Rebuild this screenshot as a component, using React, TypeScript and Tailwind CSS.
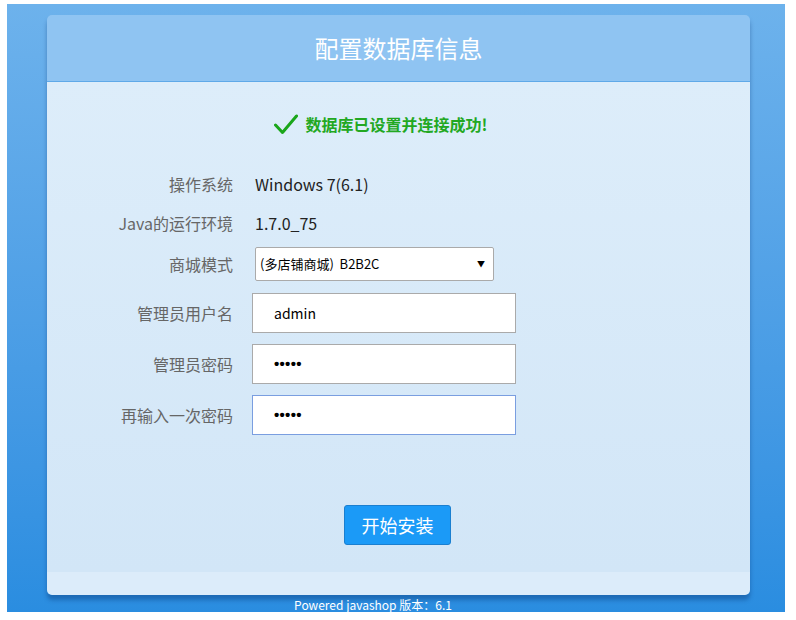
import { type FC } from 'react';

const font = "font-['Microsoft_YaHei','Noto_Sans_CJK_SC',sans-serif]";

const Row: FC<{ label: string; className?: string; children: React.ReactNode }> = ({ label, className, children }) => (
  <div className={`flex items-center ${className ?? ''}`}>
    <div className="w-[186px] shrink-0 text-right text-[16px] text-[#666]">{label}</div>
    <div className="flex-1">{children}</div>
  </div>
);

const Dots = () => (
  <span className="font-['Liberation_Sans',Arial,sans-serif] text-[15px] font-bold tracking-[0.3px]">•••••</span>
);

export default function App() {
  return (
    <div className={`min-h-[620px] bg-white pl-[7px] pt-[4px] ${font}`}>
      <div className="relative h-[608px] w-[778px] overflow-hidden bg-gradient-to-b from-[#6db2ec] to-[#2a8de0]">
        <div className="ml-[40px] mr-[35px] mt-[11px] flex h-[580px] flex-col overflow-hidden rounded-[5px] shadow-[0_5px_4px_rgba(0,40,100,0.35)]">
          <div className="flex h-[67px] shrink-0 items-center justify-center border-b border-[#5fa9e8] bg-[#8fc4f2] text-[24px] text-white">
            配置数据库信息
          </div>

          <div className="flex flex-1 flex-col bg-gradient-to-b from-[#ddedfa] to-[#d2e6f7]">
            <div className="mt-[30px] flex h-[24px] items-center justify-center gap-[8px] pr-[36px]">
              <svg width="24" height="21" viewBox="0 0 24 21" fill="none">
                <path d="M1.5 11 L8.5 18.5 L22.5 2" stroke="#1aa61a" strokeWidth="3" strokeLinecap="round" strokeLinejoin="round" />
              </svg>
              <span className="text-[16px] font-bold text-[#22a822]">数据库已设置并连接成功!</span>
            </div>

            <Row label="操作系统" className="mt-[33px] h-[30px]">
              <span className="pl-[22px] text-[16px] text-[#222]">Windows 7(6.1)</span>
            </Row>
            <Row label="Java的运行环境" className="mt-[9px] h-[30px]">
              <span className="pl-[22px] text-[16px] text-[#222]">1.7.0_75</span>
            </Row>
            <Row label="商城模式" className="mt-[9px] h-[34px]">
              <div className="ml-[22px] flex h-[34px] w-[239px] items-center justify-between rounded-[2px] border border-[#aaa] bg-white pl-[4px] pr-[8px] text-[13px] text-black">
                <span>(多店铺商城)&nbsp; B2B2C</span>
                <span className="text-[8px]">▼</span>
              </div>
            </Row>
            <Row label="管理员用户名" className="mt-[12px] h-[40px]">
              <div className="ml-[19px] flex h-[40px] w-[264px] items-center border border-[#aaa] bg-white pl-[21px] text-[14px] text-black">
                admin
              </div>
            </Row>
            <Row label="管理员密码" className="mt-[11px] h-[40px]">
              <div className="ml-[19px] flex h-[40px] w-[264px] items-center border border-[#aaa] bg-white pl-[21px] text-black">
                <Dots />
              </div>
            </Row>
            <Row label="再输入一次密码" className="mt-[11px] h-[40px]">
              <div className="ml-[19px] flex h-[40px] w-[264px] items-center border border-[#7a9ee0] bg-white pl-[21px] text-black">
                <Dots />
              </div>
            </Row>

            <div className="mt-[70px] flex justify-center pr-[2px]">
              <button className="h-[40px] w-[107px] rounded-[3px] border border-[#1a7fd0] bg-[#1b9af7] text-[18px] text-white">
                开始安装
              </button>
            </div>
          </div>

          <div className="h-[23px] shrink-0 bg-[#dcecfa]" />
        </div>

        <div className="mt-[3px] pr-[46px] text-center text-[12px] leading-[13px] text-white">
          Powered javashop 版本：6.1
        </div>
      </div>
    </div>
  );
}
